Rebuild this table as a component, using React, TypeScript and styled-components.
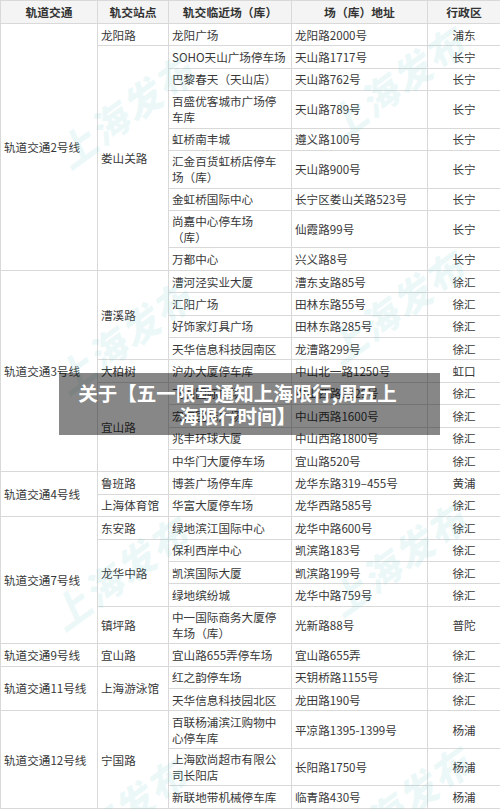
import React from 'react';
import styled, { createGlobalStyle } from 'styled-components';

const text = '#383838';
const line = '#d9d9d9';

const GlobalStyle = createGlobalStyle`
  html, body {
    margin: 0;
    padding: 0;
    background: #ffffff;
  }
  body {
    font-family: "Noto Sans CJK SC", "Noto Sans", sans-serif;
    color: ${text};
    text-spacing-trim: space-all;
  }
`;

// [place, address, district, two-line row]
type Place = [string, string, string, boolean?];

interface Station {
  name: string;
  places: Place[];
}

interface Line {
  line: string;
  stations: Station[];
}

const data: Line[] = [
  {
    line: '轨道交通2号线',
    stations: [
      { name: '龙阳路', places: [['龙阳广场', '龙阳路2000号', '浦东']] },
      {
        name: '娄山关路',
        places: [
          ['SOHO天山广场停车场', '天山路1717号', '长宁'],
          ['巴黎春天（天山店）', '天山路762号', '长宁'],
          ['百盛优客城市广场停\n车库', '天山路789号', '长宁', true],
          ['虹桥南丰城', '遵义路100号', '长宁'],
          ['汇金百货虹桥店停车\n场（库）', '天山路900号', '长宁', true],
          ['金虹桥国际中心', '长宁区娄山关路523号', '长宁'],
          ['尚嘉中心停车场\n（库）', '仙霞路99号', '长宁', true],
          ['万都中心', '兴义路8号', '长宁'],
        ],
      },
    ],
  },
  {
    line: '轨道交通3号线',
    stations: [
      {
        name: '漕溪路',
        places: [
          ['漕河泾实业大厦', '漕东支路85号', '徐汇'],
          ['汇阳广场', '田林东路55号', '徐汇'],
          ['好饰家灯具广场', '田林东路285号', '徐汇'],
          ['天华信息科技园南区', '龙漕路299号', '徐汇'],
        ],
      },
      { name: '大柏树', places: [['沪办大厦停车库', '中山北一路1250号', '虹口']] },
      {
        name: '宜山路',
        places: [
          ['飞洲国际广场', '中山西路1229号', '徐汇'],
          ['宏汇国际广场', '中山西路1600号', '徐汇'],
          ['兆丰环球大厦', '中山西路1800号', '徐汇'],
          ['中华门大厦停车场', '宜山路520号', '徐汇'],
        ],
      },
    ],
  },
  {
    line: '轨道交通4号线',
    stations: [
      { name: '鲁班路', places: [['博荟广场停车库', '龙华东路319–455号', '黄浦']] },
      { name: '上海体育馆', places: [['华富大厦停车场', '龙华西路585号', '徐汇']] },
    ],
  },
  {
    line: '轨道交通7号线',
    stations: [
      { name: '东安路', places: [['绿地滨江国际中心', '龙华中路600号', '徐汇']] },
      {
        name: '龙华中路',
        places: [
          ['保利西岸中心', '凯滨路183号', '徐汇'],
          ['凯滨国际大厦', '凯滨路199号', '徐汇'],
          ['绿地缤纷城', '龙华中路759号', '徐汇'],
        ],
      },
      { name: '镇坪路', places: [['中一国际商务大厦停\n车场（库）', '光新路88号', '普陀', true]] },
    ],
  },
  {
    line: '轨道交通9号线',
    stations: [{ name: '宜山路', places: [['宜山路655弄停车场', '宜山路655弄', '徐汇']] }],
  },
  {
    line: '轨道交通11号线',
    stations: [
      {
        name: '上海游泳馆',
        places: [
          ['红之韵停车场', '天钥桥路1155号', '徐汇'],
          ['天华信息科技园北区', '龙田路190号', '徐汇'],
        ],
      },
    ],
  },
  {
    line: '轨道交通12号线',
    stations: [
      {
        name: '宁国路',
        places: [
          ['百联杨浦滨江购物中\n心停车库', '平凉路1395-1399号', '杨浦', true],
          ['上海欧尚超市有限公\n司长阳店', '长阳路1750号', '杨浦', true],
          ['新联地带机械停车库', '临青路430号', '杨浦'],
        ],
      },
    ],
  },
];

const watermarks = [
  { x: 128, y: 108 },
  { x: 398, y: 80 },
  { x: 126, y: 334 },
  { x: 398, y: 304 },
  { x: 122, y: 570 },
  { x: 400, y: 556 },
  { x: 120, y: 812 },
  { x: 404, y: 800 },
];

const Page = styled.div`
  position: relative;
  width: 500px;
  height: 809px;
  overflow: hidden;
`;

const Table = styled.table`
  width: 500px;
  border-collapse: collapse;
  table-layout: fixed;
  font-size: 11.6px;
  line-height: 16px;
`;

const Row = styled.tr<{ $tall?: boolean }>`
  height: ${({ $tall }) => ($tall ? '37.5px' : '22.4px')};
`;

const HeadRow = styled.tr`
  height: 23px;
  background: #f4f4f4;
`;

const Th = styled.th`
  border: 1px solid ${line};
  padding: 0 2px;
  font-weight: 700;
  font-size: 11.8px;
  color: #333333;
  text-align: center;
  vertical-align: middle;
  white-space: nowrap;
`;

const Cell = styled.td<{ $center?: boolean }>`
  border: 1px solid ${line};
  padding: ${({ $center }) => ($center ? '2px 3px' : '2px 3px 2px 3px')};
  text-align: ${({ $center }) => ($center ? 'center' : 'left')};
  vertical-align: middle;
  color: ${text};
  white-space: pre;
  overflow: hidden;
`;

const Banner = styled.div`
  position: absolute;
  left: 59px;
  top: 373px;
  width: 381px;
  height: 62px;
  box-sizing: border-box;
  padding: 0 24px 0 0;
  background: rgba(0, 0, 0, 0.47);
  color: #ffffff;
  font-size: 19.5px;
  font-weight: 700;
  line-height: 23px;
  text-align: center;
  white-space: nowrap;
  display: flex;
  align-items: center;
  justify-content: center;
`;

const Watermark = styled.div`
  position: absolute;
  transform: translate(-50%, -50%) rotate(-36deg) skewX(-12deg);
  font-size: 38px;
  font-weight: 900;
  letter-spacing: 2px;
  color: rgba(110, 205, 205, 0.12);
  white-space: nowrap;
  pointer-events: none;
`;

export default function App() {
  const rows: React.ReactNode[] = [];
  data.forEach((l, li) => {
    const lineCount = l.stations.reduce((n, s) => n + s.places.length, 0);
    l.stations.forEach((s, si) => {
      s.places.forEach((p, pi) => {
        const [place, addr, district, tall] = p;
        rows.push(
          <Row key={`${li}-${si}-${pi}`} $tall={tall}>
            {si === 0 && pi === 0 && <Cell rowSpan={lineCount}>{l.line}</Cell>}
            {pi === 0 && <Cell rowSpan={s.places.length}>{s.name}</Cell>}
            <Cell>{place}</Cell>
            <Cell>{addr}</Cell>
            <Cell $center>{district}</Cell>
          </Row>
        );
      });
    });
  });

  return (
    <>
      <GlobalStyle />
      <Page>
        <Table>
          <colgroup>
            <col style={{ width: 97 }} />
            <col style={{ width: 71 }} />
            <col style={{ width: 123 }} />
            <col style={{ width: 136 }} />
            <col style={{ width: 73 }} />
          </colgroup>
          <thead>
            <HeadRow>
              <Th>轨道交通</Th>
              <Th>轨交站点</Th>
              <Th>轨交临近场（库）</Th>
              <Th>场（库）地址</Th>
              <Th>行政区</Th>
            </HeadRow>
          </thead>
          <tbody>{rows}</tbody>
        </Table>
        {watermarks.map((w, i) => (
          <Watermark key={i} style={{ left: w.x, top: w.y }}>
            上海发布
          </Watermark>
        ))}
        <Banner>
          关于【五一限号通知上海限行,周五上
          <br />
          海限行时间】
        </Banner>
      </Page>
    </>
  );
}
